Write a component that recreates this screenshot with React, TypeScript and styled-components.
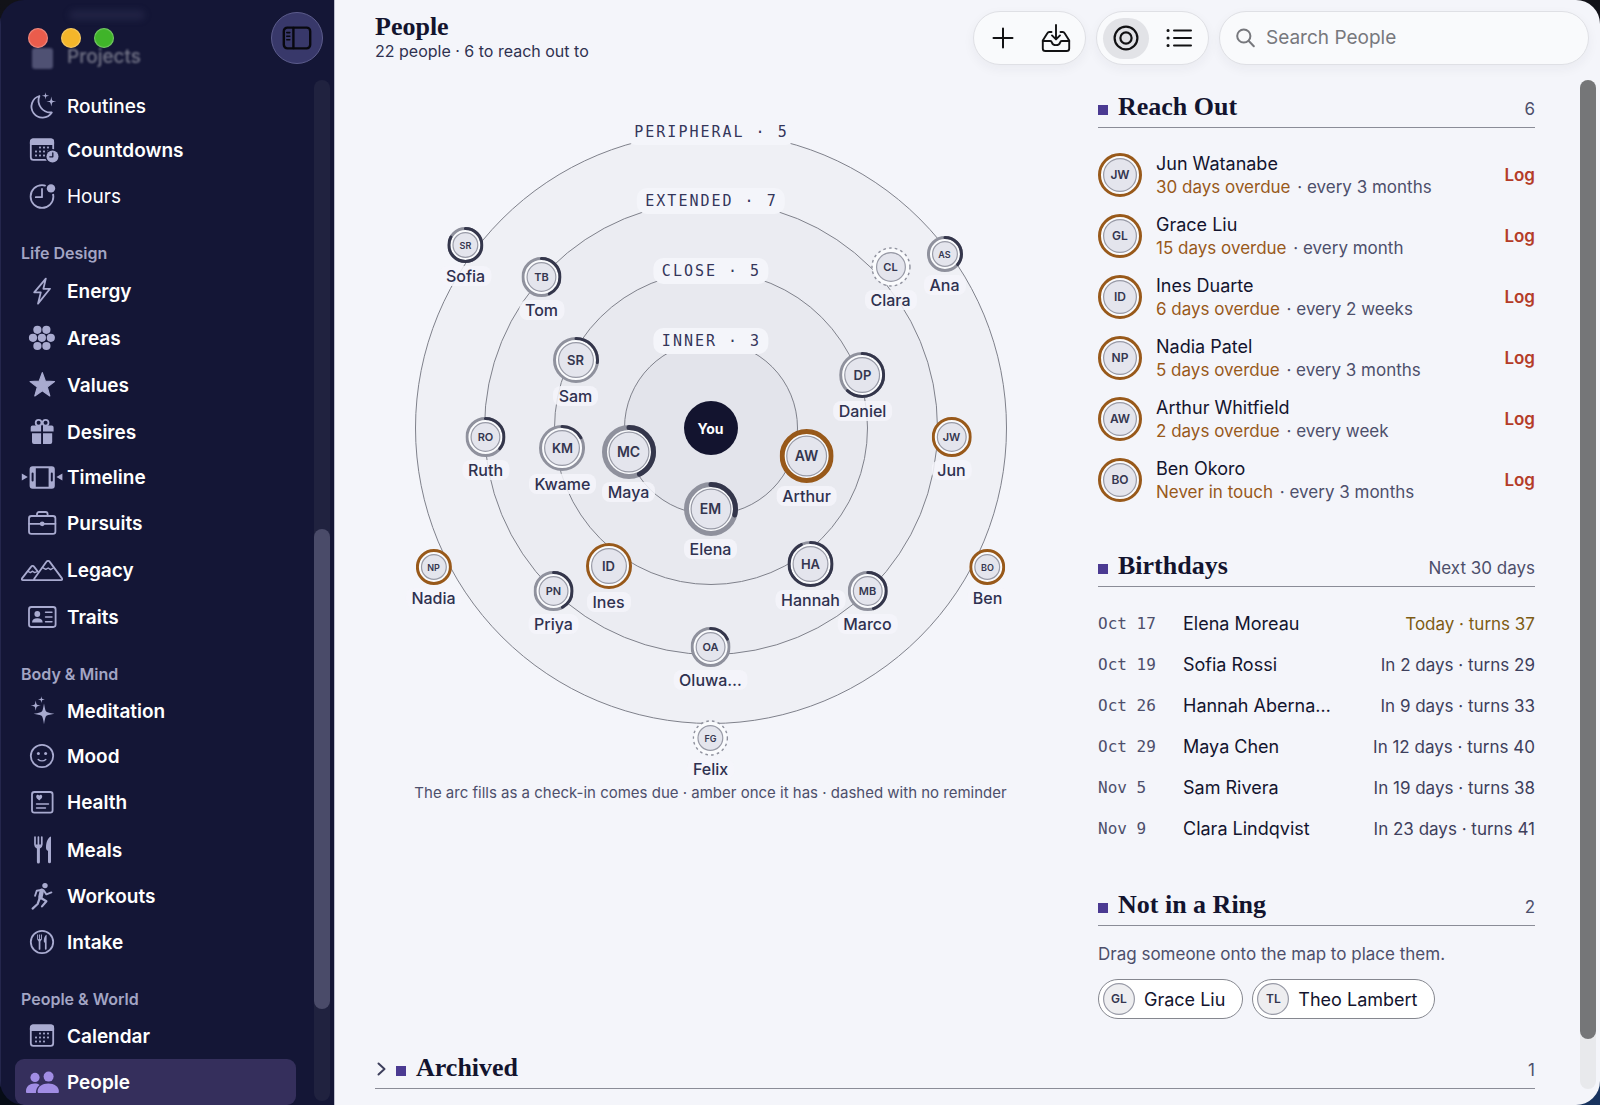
import React from "react";
import styled, { createGlobalStyle, css } from "styled-components";

const sans = `Inter, "Liberation Sans", sans-serif`;
const serif = `"Liberation Serif", serif`;
const mono = `"DejaVu Sans Mono", "Liberation Mono", monospace`;

const color = {
  night: "#141636",
  icon: "#a9abd0",
  paper: "#f4f5fa",
  ink: "#13142e",
  text: "#2f3150",
  muted: "#4d4f6b",
  rule: "#8a8c97",
  amber: "#98591a",
  gold: "#7d5c14",
  red: "#b43c28",
  violet: "#4b3a92",
};

const GlobalStyle = createGlobalStyle`
  *, *::before, *::after { box-sizing: border-box; }
  body {
    margin: 0;
    font-family: ${sans};
    background:
      linear-gradient(to bottom, #121218, transparent 50%),
      linear-gradient(to right, #060c16 40%, #18335f);
  }
  button { font: inherit; color: inherit; border: 0; padding: 0; background: none; cursor: pointer; }
  ul { list-style: none; margin: 0; padding: 0; }
  h1, h2, p { margin: 0; }
`;

const Window = styled.div`
  display: grid;
  grid-template-columns: 334px minmax(0, 1fr);
  height: 100vh;
  border-radius: 24px;
  overflow: hidden;
`;

/* ---------- Sidebar ---------- */

const Sidebar = styled.aside`
  position: relative;
  display: flex;
  min-height: 0;
  overflow: hidden;
  background: ${color.night};
  border-left: 1px solid #24264c;
`;

const WindowBar = styled.div`
  position: absolute;
  inset: 0 0 auto 0;
  display: flex;
  align-items: center;
  gap: 13px;
  height: 75px;
  padding: 0 11px 0 27px;
`;

const Light = styled.button<{ $fill: string }>`
  width: 20px;
  height: 20px;
  border-radius: 50%;
  background: ${(p) => p.$fill};
  box-shadow: inset 0 0 1px 1px rgba(255, 255, 255, 0.3);
`;

const SidebarToggle = styled.button`
  display: grid;
  place-items: center;
  width: 52px;
  height: 52px;
  margin-left: auto;
  border-radius: 50%;
  background: #38386a;
  border: 1px solid #5c5c8c;
`;

const Nav = styled.nav`
  flex: 1;
  min-width: 0;
  padding: 0 18px 0 14px;
`;

const NavGroupTitle = styled.h2`
  height: 47px;
  padding: 22px 0 0 6px;
  font: 600 16px/22px ${sans};
  color: #a3a5c4;
`;

const NavLink = styled.a<{ $height: number; $weight: number; $active?: boolean }>`
  display: flex;
  align-items: center;
  gap: 4px;
  height: ${(p) => p.$height}px;
  padding-left: 6px;
  border-radius: 9px;
  font-size: 19px;
  font-weight: ${(p) => p.$weight};
  text-decoration: none;
  color: #fff;
  background: ${(p) => (p.$active ? "#352f5c" : "transparent")};
  svg { color: ${(p) => (p.$active ? "#a18de4" : color.icon)}; flex: none; }
`;

const ScrolledUnder = styled.div`
  height: 84px;
  padding-top: 6px;
  filter: blur(1px);
  opacity: 0.4;
`;

const FadedBar = styled.div`
  width: 76px;
  height: 10px;
  margin: 4px 0 12px 54px;
  border-radius: 5px;
  background: #34365a;
  filter: blur(3px);
`;

const Track = styled.div<{ $tone: "dark" | "light" }>`
  flex: none;
  width: 16px;
  margin: 80px 4px ${(p) => (p.$tone === "dark" ? 4 : 16)}px 0;
  border-radius: 8px;
  background: ${(p) => (p.$tone === "dark" ? "#20223f" : "#e8e9ec")};
`;

const Thumb = styled.div<{ $start: number; $size: number; $fill: string }>`
  height: ${(p) => p.$size}%;
  border-radius: 8px;
  background: ${(p) => p.$fill};
  position: relative;
  top: ${(p) => p.$start}%;
`;

/* ---------- Main ---------- */

const Main = styled.main`
  display: flex;
  min-width: 0;
  min-height: 0;
  overflow: hidden;
  background: ${color.paper};
  border-left: 1px solid #bfc0ce;
  color: ${color.ink};
`;

const Page = styled.div`
  flex: 1;
  min-width: 0;
  padding: 0 45px 16px 40px;
`;

const Toolbar = styled.header`
  display: flex;
  align-items: flex-start;
  gap: 10px;
  height: 80px;
  margin-right: -54px;
  padding-top: 11px;
`;

const TitleBlock = styled.div`
  flex: 1;
`;

const Title = styled.h1`
  font: 700 26px/32px ${serif};
`;

const Subtitle = styled.p`
  font-size: 16px;
  line-height: 16px;
  color: ${color.text};
`;

const pill = css`
  display: flex;
  align-items: center;
  height: 54px;
  border: 1px solid #dfe0e5;
  border-radius: 27px;
  background: #f9fafc;
  box-shadow: 0 4px 12px rgba(30, 32, 60, 0.05);
`;

const ToolGroup = styled.div`
  ${pill}
  gap: 7px;
  padding: 0 6px;
`;

const ToolButton = styled.button<{ $selected?: boolean }>`
  display: grid;
  place-items: center;
  width: 46px;
  height: 41px;
  border-radius: 21px;
  background: ${(p) => (p.$selected ? "#e2e3e7" : "transparent")};
  color: #121214;
`;

const SearchBox = styled.label`
  ${pill}
  width: 370px;
  padding: 0 16px;
  gap: 11px;
  color: #77787d;
`;

const SearchInput = styled.input`
  flex: 1;
  min-width: 0;
  padding: 0;
  border: 0;
  outline: 0;
  background: none;
  font: 400 19px/24px ${sans};
  color: ${color.ink};
  &::placeholder { color: #77787d; opacity: 1; }
`;

const Columns = styled.div`
  display: grid;
  grid-template-columns: minmax(0, 1fr) 437px;
  gap: 52px;
`;

const SectionStack = styled.div`
  display: flex;
  flex-direction: column;
  gap: 40px;
  padding-top: 11px;
`;

const SectionHead = styled.div`
  display: flex;
  align-items: baseline;
  gap: 10px;
  height: 37px;
  border-bottom: 1px solid ${color.rule};
`;

const Marker = styled.span`
  width: 10px;
  height: 10px;
  margin-bottom: -1px;
  background: ${color.violet};
`;

const SectionTitle = styled.h2`
  flex: 1;
  font: 700 26px/32px ${serif};
`;

const SectionNote = styled.span`
  font-size: 17px;
  color: ${color.muted};
`;

/* ---------- Ring map ---------- */

const MapFigure = styled.figure`
  margin: 0;
  text-align: center;
`;

const MapCanvas = styled.div`
  position: relative;
  height: 703px;
`;

const Ring = styled.div<{ $r: number; $fill: string }>`
  position: absolute;
  left: calc(50% - ${(p) => p.$r}px);
  top: ${(p) => 348 - p.$r}px;
  width: ${(p) => p.$r * 2}px;
  height: ${(p) => p.$r * 2}px;
  border-radius: 50%;
  border: 1px solid #7f818b;
  background: ${(p) => p.$fill};
`;

const RingLabel = styled.span<{ $r: number }>`
  position: absolute;
  left: 50%;
  top: ${(p) => 335 - p.$r}px;
  transform: translateX(-50%);
  padding: 0 7px 0 9px;
  border-radius: 10px;
  background: ${color.paper};
  font: 400 15px/26px ${mono};
  letter-spacing: 2px;
  white-space: pre;
  color: #34365a;
`;

const You = styled.div`
  position: absolute;
  left: calc(50% - 27px);
  top: 321px;
  display: grid;
  place-items: center;
  width: 54px;
  height: 54px;
  border-radius: 50%;
  background: #13142f;
  color: #fff;
  font-size: 14px;
  font-weight: 700;
`;

const Node = styled.button<{ $x: number; $y: number; $d: number }>`
  position: absolute;
  left: calc(50% + ${(p) => p.$x}px);
  top: ${(p) => 348 + p.$y - p.$d / 2}px;
  transform: translateX(-50%);
  display: flex;
  flex-direction: column;
  align-items: center;
  gap: 3px;
`;

const NodeName = styled.span`
  padding: 0 6px;
  border-radius: 8px;
  background: rgba(244, 245, 250, 0.85);
  font-size: 16px;
  font-weight: 500;
  line-height: 20px;
  color: ${color.text};
`;

const AvatarBox = styled.span<{ $font: number }>`
  display: grid;
  place-items: center;
  flex: none;
  font-size: ${(p) => p.$font}px;
  font-weight: 600;
  line-height: 1;
  color: #34364f;
  > * { grid-area: 1 / 1; }
  svg { display: block; }
`;

const Caption = styled.figcaption`
  font-size: 15px;
  line-height: 20px;
  color: ${color.muted};
`;

/* ---------- Lists ---------- */

const List = styled.ul`
  padding-top: 16px;
`;

const ReachRow = styled.li`
  display: flex;
  align-items: center;
  gap: 14px;
  height: 61px;
`;

const ReachText = styled.div`
  flex: 1;
  min-width: 0;
  padding-top: 2px;
`;

const PersonName = styled.div`
  font-size: 18px;
  line-height: 24px;
`;

const ReachDetail = styled.div`
  font-size: 17px;
  line-height: 23px;
  color: ${color.muted};
`;

const Overdue = styled.span`
  margin-right: 2px;
  color: ${color.amber};
`;

const LogButton = styled.button`
  font-size: 17px;
  font-weight: 600;
  color: ${color.red};
`;

const BirthdayRow = styled.li<{ $today?: boolean }>`
  display: grid;
  grid-template-columns: 85px minmax(0, 1fr) auto;
  align-items: center;
  height: 41px;
  font-size: 17px;
  color: ${(p) => (p.$today ? color.gold : "#3e405c")};
  ${PersonName} { color: ${color.ink}; }
`;

const DateText = styled.time`
  font: 400 16px/24px ${mono};
  color: ${color.muted};
`;

const Hint = styled.p`
  padding: 15px 0 12px;
  font-size: 17px;
  line-height: 26px;
  color: ${color.muted};
`;

const Chips = styled.div`
  display: flex;
  gap: 9px;
`;

const Chip = styled.button`
  display: flex;
  align-items: center;
  gap: 9px;
  height: 40px;
  padding: 0 17px 0 4px;
  border: 1px solid #85878f;
  border-radius: 20px;
  background: #fff;
  font-size: 18px;
  color: ${color.ink};
`;

const ArchiveToggle = styled.button`
  display: block;
  width: 100%;
  margin-top: 33px;
  text-align: left;
`;

const Chevron = styled.svg`
  margin: 0 0 -2px 2px;
`;

/* ---------- Drawings ---------- */

const Icon = ({ children }: { children: React.ReactNode }) => (
  <svg width="42" height="30" viewBox="0 0 42 30" fill="none" stroke="currentColor" strokeWidth="1.8" strokeLinecap="round" strokeLinejoin="round" aria-hidden="true">
    {children}
  </svg>
);

const Spark = ({ x, y, r }: { x: number; y: number; r: number }) => {
  const k = r * 0.22;
  return (
    <path
      stroke="none"
      fill="currentColor"
      d={`M${x} ${y - r}Q${x + k * 0.6} ${y - k} ${x + k} ${y - k}Q${x + k} ${y - k * 0.6} ${x + r} ${y}Q${x + k} ${y + k * 0.6} ${x + k} ${y + k}Q${x + k * 0.6} ${y + k} ${x} ${y + r}Q${x - k * 0.6} ${y + k} ${x - k} ${y + k}Q${x - k} ${y + k * 0.6} ${x - r} ${y}Q${x - k} ${y - k * 0.6} ${x - k} ${y - k}Q${x - k * 0.6} ${y - k} ${x} ${y - r}Z`}
    />
  );
};

const CalendarShape = () => (
  <>
    <rect x="9.8" y="4.3" width="22.4" height="20.6" rx="2.6" />
    <path d="M9.8 9V6.5a2 2 0 0 1 2-2h18.4a2 2 0 0 1 2 2V9z" fill="currentColor" />
    {[
      [19, 12.5], [23, 12.5], [27, 12.5],
      [15, 16.5], [19, 16.5], [23, 16.5], [27, 16.5],
      [15, 20.5], [19, 20.5], [23, 20.5],
    ].map(([x, y]) => (
      <rect key={`${x}-${y}`} x={x - 0.9} y={y - 0.9} width="1.8" height="1.8" fill="currentColor" stroke="none" />
    ))}
  </>
);

const Cutlery = () => (
  <>
    <path d="M14 2v7.5c0 2 1 2.6 2.2 3.2M20.8 2v7.5c0 2-1 2.6-2.2 3.2M17.4 2v9" strokeWidth="1.7" />
    <path d="M14.5 9.5h6l-1.6 3.2h-3z" fill="currentColor" stroke="none" />
    <path d="M17.4 11.5V27" strokeWidth="3" />
    <path d="M29.6 1.6c-3 1.8-4.6 6-4.6 11.2 0 1.7.8 2.7 2 3v11a1.5 1.5 0 0 0 3 0V2z" fill="currentColor" stroke="none" />
  </>
);

const icons: Record<string, React.ReactNode> = {
  Projects: <rect x="11" y="7" width="21" height="21" rx="3" fill="currentColor" stroke="none" />,
  Routines: (
    <>
      <path d="M18.4 5A11 11 0 1 0 30.8 21.4A12 12 0 0 1 18.4 5Z" />
      <Spark x={24.5} y={4.8} r={3.6} />
      <Spark x={30.3} y={10.6} r={5} />
    </>
  ),
  Countdowns: (
    <>
      <CalendarShape />
      <circle cx="31.5" cy="21.5" r="7.4" fill={color.night} stroke="none" />
      <circle cx="31.5" cy="21.5" r="6" fill="currentColor" stroke="none" />
      <path d="M31.8 17.8v4h-3" stroke={color.night} strokeWidth="1.3" />
    </>
  ),
  Hours: (
    <>
      <circle cx="21" cy="15.5" r="11.4" />
      <path d="M21 8v8.2h-6.2" />
      <circle cx="30" cy="7.4" r="6" fill={color.night} stroke="none" />
      <circle cx="30" cy="7.4" r="4.2" fill="currentColor" stroke="none" />
    </>
  ),
  Energy: <path d="M24.8 2.6L13.2 16.4h6.6L17 27.6L29 12.8h-6.6z" />,
  Areas: (
    <g fill="currentColor" stroke="none">
      {[[16.4, 6.8], [25.4, 6.8], [12, 14.8], [20.9, 14.8], [29.8, 14.8], [16.4, 23], [25.4, 23]].map(([x, y]) => (
        <circle key={`${x}-${y}`} cx={x} cy={y} r="4.1" />
      ))}
    </g>
  ),
  Values: (
    <path d="M21.3 2.6l3.1 8.6 9.1.3-7.2 5.6 2.5 8.8-7.5-5.1-7.5 5.1 2.5-8.8-7.2-5.6 9.1-.3z" fill="currentColor" strokeWidth="1.2" />
  ),
  Desires: (
    <>
      <circle cx="17.6" cy="5.7" r="2.9" />
      <circle cx="24.6" cy="5.7" r="2.9" />
      <path
        fill="currentColor"
        stroke="none"
        d="M11.5 8.5h8.6v6H9.7v-4a2 2 0 0 1 1.8-2zM22 8.5h8.8a2 2 0 0 1 1.8 2v4H22zM11 16.2h9.1v10.7h-7a2 2 0 0 1-2.1-2zM22 16.2h9.2v8.7a2 2 0 0 1-2.1 2H22z"
      />
    </>
  ),
  Timeline: (
    <>
      <path
        fill="currentColor"
        fillRule="evenodd"
        stroke="none"
        d="M11.600 4.200h19.200a3 3 0 0 1 3 3v16.600a3 3 0 0 1-3 3H11.600a3 3 0 0 1-3-3V7.200a3 3 0 0 1 3-3zM14.800 6.200v18.600h12.800V6.200zM10.600 11.500v7a1 1 0 0 0 2 0v-7a1 1 0 0 0-2 0zM29.800 11.500v7a1 1 0 0 0 2 0v-7a1 1 0 0 0-2 0z"
      />
      <path d="M.8 11.6v7l6-3.5zM41.400 11.600v7l-6-3.500z" fill="currentColor" stroke="none" />
    </>
  ),
  Pursuits: (
    <>
      <rect x="8" y="8" width="26.4" height="17.8" rx="2.4" />
      <path d="M16 8V6a2 2 0 0 1 2-2h6.6a2 2 0 0 1 2 2v2M8 15.8h26.4" />
      <circle cx="21.2" cy="15.8" r="2.4" fill="currentColor" stroke="none" />
    </>
  ),
  Legacy: (
    <>
      <path d="M14 25.2h26c1.2 0 1.6-.8 1-1.8L28.6 6.6a1.8 1.8 0 0 0-3 0L13.4 23.6c-.6.8-.4 1.6.6 1.6z" />
      <path d="M13.6 25.2H2c-1.2 0-1.7-.8-1-1.8l9.2-11.8a1.7 1.7 0 0 1 2.8 0l4 5.2" />
      <path d="M22 12.8l2.800 1.600 2.400-1.400 2.400 1.600 2.600-1.600M7.400 16.600l2 1 2.200-1.400 2 1.400 2-.8" strokeWidth="1.400" />
    </>
  ),
  Traits: (
    <>
      <rect x="8" y="5" width="26.6" height="20" rx="2.4" />
      <circle cx="16.3" cy="12" r="2.9" fill="currentColor" stroke="none" />
      <path d="M11 20.4c.2-3 2-4.2 5.3-4.2s5.200 1.200 5.400 4.200z" fill="currentColor" stroke="none" />
      <path d="M24.500 10.300h6.500M24.500 15h6.500M24.500 19.700h6.500" strokeWidth="1.400" />
    </>
  ),
  Meditation: (
    <>
      <Spark x={23} y={17.8} r={10.4} />
      <Spark x={14.7} y={9.6} r={5.2} />
      <Spark x={20.4} y={3.6} r={3.4} />
    </>
  ),
  Mood: (
    <>
      <circle cx="21" cy="15" r="11.2" />
      <circle cx="17.4" cy="12.4" r="1.5" fill="currentColor" stroke="none" />
      <circle cx="24.6" cy="12.4" r="1.5" fill="currentColor" stroke="none" />
      <path d="M17.2 18.4c2 2 5.600 2 7.600 0" strokeWidth="1.400" />
    </>
  ),
  Health: (
    <>
      <rect x="11" y="5" width="20.600" height="20.600" rx="2.400" />
      <path d="M18.200 13.400c-2-1.400-3-2.400-3-3.800 0-2 2.300-2.400 3-.8.7-1.600 3-1.200 3 .8 0 1.400-1 2.400-3 3.800z" fill="currentColor" stroke="none" />
      <path d="M15.500 17h12M15.500 21h9" strokeWidth="1.400" />
    </>
  ),
  Meals: <Cutlery />,
  Workouts: (
    <>
      <circle cx="24" cy="4.600" r="2.700" fill="currentColor" stroke="none" />
      <path d="M20.800 9.800l-1.400 6.400" strokeWidth="4.400" />
      <path d="M21.500 8.800l-5.800 1-1.600 5M22.600 9.200l2.800 4.200 5-2" strokeWidth="1.900" />
      <path d="M20 17l5.400 3.200-4.400 5.200M18.600 17.500l-2 5.500-5 4.600" strokeWidth="2.200" />
    </>
  ),
  Intake: (
    <>
      <circle cx="21" cy="15" r="11.200" />
      <g transform="translate(8.800 6.800) scale(.56)">
        <Cutlery />
      </g>
    </>
  ),
  Calendar: <CalendarShape />,
  People: (
    <g fill="currentColor" stroke="none">
      <circle cx="14" cy="10.400" r="4.600" />
      <path d="M5 24.400c0-4.800 3.600-7.800 8.600-7.800 2 0 3.600.4 5 1.400-2.400 1.800-3.600 4.400-3.700 8H6.200c-.8 0-1.200-.6-1.200-1.600z" />
      <circle cx="27.600" cy="9.600" r="5" />
      <path d="M16.600 24.400c0-5 4.600-8 10.700-8s10.600 3 10.600 8c0 1-.5 1.600-1.300 1.600H17.900c-.8 0-1.300-.6-1.300-1.600z" />
    </g>
  ),
};

/* ---------- Avatar ---------- */

type AvatarProps = {
  initials: string;
  d: number;
  core: number;
  stroke: number;
  font: number;
  /** Share of the check-in interval that has passed; "due" or "none" otherwise. */
  state: number | "due" | "none" | "plain";
};

function Avatar({ initials, d, core, stroke, font, state }: AvatarProps) {
  const c = d / 2;
  const r = c - stroke / 2;
  return (
    <AvatarBox $font={font}>
      <svg width={d} height={d} viewBox={`0 0 ${d} ${d}`} fill="none" aria-hidden="true">
        {state !== "plain" && <circle cx={c} cy={c} r={r} fill="#fafbfd" />}
        {typeof state === "number" && (
          <>
            <circle cx={c} cy={c} r={r} stroke="#8f919d" strokeWidth={stroke} />
            <circle
              cx={c}
              cy={c}
              r={r}
              stroke="#34364b"
              strokeWidth={stroke}
              strokeLinecap="round"
              pathLength={100}
              strokeDasharray={`${state * 100} 100`}
              transform={`rotate(-90 ${c} ${c})`}
            />
          </>
        )}
        {state === "due" && <circle cx={c} cy={c} r={r} stroke={color.amber} strokeWidth={stroke} />}
        {state === "none" && <circle cx={c} cy={c} r={c - 1} stroke="#8f919d" strokeWidth="1.4" strokeDasharray="2.600 3.200" />}
        <circle cx={c} cy={c} r={core / 2 - 0.6} fill={state === "plain" ? "#eeeef0" : "#e4e5ed"} stroke="#989aa6" strokeWidth="1.2" />
      </svg>
      <span>{initials}</span>
    </AvatarBox>
  );
}

/* ---------- Data ---------- */

type NavItem = { name: string; height: number; weight?: number };

const navTop: NavItem[] = [
  { name: "Routines", height: 44, weight: 500 },
  { name: "Countdowns", height: 44 },
  { name: "Hours", height: 48, weight: 400 },
];

const navGroups: { title: string; items: NavItem[] }[] = [
  {
    title: "Life Design",
    items: [
      { name: "Energy", height: 48 },
      { name: "Areas", height: 46 },
      { name: "Values", height: 48 },
      { name: "Desires", height: 46 },
      { name: "Timeline", height: 44 },
      { name: "Pursuits", height: 48 },
      { name: "Legacy", height: 46 },
      { name: "Traits", height: 48 },
    ],
  },
  {
    title: "Body & Mind",
    items: [
      { name: "Meditation", height: 46 },
      { name: "Mood", height: 44 },
      { name: "Health", height: 48 },
      { name: "Meals", height: 48 },
      { name: "Workouts", height: 44 },
      { name: "Intake", height: 48 },
    ],
  },
  {
    title: "People & World",
    items: [
      { name: "Calendar", height: 46 },
      { name: "People", height: 46 },
    ],
  },
];

const rings = [
  { label: "PERIPHERAL · 5", r: 296, fill: "#eff0f5" },
  { label: "EXTENDED · 7", r: 227, fill: "#ebecf2" },
  { label: "CLOSE · 5", r: 157, fill: "#e8e9ef" },
  { label: "INNER · 3", r: 87, fill: "#e3e4eb" },
];

const tiers = {
  inner: { d: 54, core: 41, stroke: 5, font: 14 },
  close: { d: 46, core: 36, stroke: 3, font: 13 },
  extended: { d: 40, core: 30, stroke: 3, font: 11 },
  peripheral: { d: 36, core: 26, stroke: 3, font: 9 },
};

type MapPerson = {
  name: string;
  initials: string;
  tier: keyof typeof tiers;
  x: number;
  y: number;
  state: number | "due" | "none";
};

const mapPeople: MapPerson[] = [
  { name: "Maya", initials: "MC", tier: "inner", x: -82, y: 24, state: 0.43 },
  { name: "Elena", initials: "EM", tier: "inner", x: 0, y: 81, state: 0.29 },
  { name: "Arthur", initials: "AW", tier: "inner", x: 96, y: 28, state: "due" },
  { name: "Sam", initials: "SR", tier: "close", x: -135, y: -68, state: 0.27 },
  { name: "Kwame", initials: "KM", tier: "close", x: -148, y: 20, state: 0.17 },
  { name: "Ines", initials: "ID", tier: "close", x: -102, y: 138, state: "due" },
  { name: "Hannah", initials: "HA", tier: "close", x: 100, y: 136, state: 0.93 },
  { name: "Daniel", initials: "DP", tier: "close", x: 152, y: -53, state: 0.62 },
  { name: "Tom", initials: "TB", tier: "extended", x: -169, y: -151, state: 0.43 },
  { name: "Ruth", initials: "RO", tier: "extended", x: -225, y: 9, state: 0.36 },
  { name: "Priya", initials: "PN", tier: "extended", x: -157, y: 163, state: 0.42 },
  { name: "Oluwa…", initials: "OA", tier: "extended", x: 0, y: 219, state: 0.18 },
  { name: "Marco", initials: "MB", tier: "extended", x: 157, y: 163, state: 0.45 },
  { name: "Jun", initials: "JW", tier: "extended", x: 241, y: 9, state: "due" },
  { name: "Clara", initials: "CL", tier: "extended", x: 180, y: -161, state: "none" },
  { name: "Sofia", initials: "SR", tier: "peripheral", x: -245, y: -183, state: 0.83 },
  { name: "Ana", initials: "AS", tier: "peripheral", x: 234, y: -174, state: 0.36 },
  { name: "Ben", initials: "BO", tier: "peripheral", x: 277, y: 139, state: "due" },
  { name: "Nadia", initials: "NP", tier: "peripheral", x: -277, y: 139, state: "due" },
  { name: "Felix", initials: "FG", tier: "peripheral", x: 0, y: 310, state: "none" },
];

const reachOut = [
  { name: "Jun Watanabe", initials: "JW", late: "30 days overdue", every: "every 3 months" },
  { name: "Grace Liu", initials: "GL", late: "15 days overdue", every: "every month" },
  { name: "Ines Duarte", initials: "ID", late: "6 days overdue", every: "every 2 weeks" },
  { name: "Nadia Patel", initials: "NP", late: "5 days overdue", every: "every 3 months" },
  { name: "Arthur Whitfield", initials: "AW", late: "2 days overdue", every: "every week" },
  { name: "Ben Okoro", initials: "BO", late: "Never in touch", every: "every 3 months" },
];

const birthdays = [
  { date: "Oct 17", name: "Elena Moreau", note: "Today · turns 37", today: true },
  { date: "Oct 19", name: "Sofia Rossi", note: "In 2 days · turns 29" },
  { date: "Oct 26", name: "Hannah Aberna…", note: "In 9 days · turns 33" },
  { date: "Oct 29", name: "Maya Chen", note: "In 12 days · turns 40" },
  { date: "Nov 5", name: "Sam Rivera", note: "In 19 days · turns 38" },
  { date: "Nov 9", name: "Clara Lindqvist", note: "In 23 days · turns 41" },
];

const unplaced = [
  { name: "Grace Liu", initials: "GL" },
  { name: "Theo Lambert", initials: "TL" },
];

/* ---------- Parts ---------- */

const NavEntry = ({ name, height, weight = 600 }: NavItem) => (
  <NavLink href="#" $height={height} $weight={weight} $active={name === "People"} aria-current={name === "People" ? "page" : undefined}>
    <Icon>{icons[name]}</Icon>
    {name}
  </NavLink>
);

const Heading = ({ title, note }: { title: string; note: string }) => (
  <SectionHead>
    <Marker />
    <SectionTitle>{title}</SectionTitle>
    <SectionNote>{note}</SectionNote>
  </SectionHead>
);

export default function App() {
  return (
    <>
      <GlobalStyle />
      <Window>
        <Sidebar>
          <Nav aria-label="Sections">
            <ScrolledUnder>
              <FadedBar />
              <NavEntry name="Projects" height={48} weight={500} />
            </ScrolledUnder>
            {navTop.map((item) => (
              <NavEntry key={item.name} {...item} />
            ))}
            {navGroups.map((group) => (
              <React.Fragment key={group.title}>
                <NavGroupTitle>{group.title}</NavGroupTitle>
                {group.items.map((item) => (
                  <NavEntry key={item.name} {...item} />
                ))}
              </React.Fragment>
            ))}
          </Nav>
          <Track $tone="dark">
            <Thumb $start={44} $size={47} $fill="#4a4b69" />
          </Track>
          <WindowBar>
            <Light $fill="#ea5c4c" aria-label="Close" />
            <Light $fill="#f4b62a" aria-label="Minimize" />
            <Light $fill="#40b42a" aria-label="Zoom" />
            <SidebarToggle aria-label="Toggle sidebar">
              <svg width="30" height="24" viewBox="0 0 30 24" fill="none" stroke="#08080f" strokeWidth="2.400" strokeLinecap="round">
                <rect x="1.800" y="1.600" width="26.400" height="20.800" rx="3.600" />
                <path d="M11.400 2v20" />
                <path d="M4.800 6.600h3M4.800 10.200h3M4.800 13.800h3" strokeWidth="1.600" />
              </svg>
            </SidebarToggle>
          </WindowBar>
        </Sidebar>

        <Main>
          <Page>
            <Toolbar>
              <TitleBlock>
                <Title>People</Title>
                <Subtitle>22 people · 6 to reach out to</Subtitle>
              </TitleBlock>
              <ToolGroup>
                <ToolButton aria-label="Add person">
                  <svg width="22" height="22" viewBox="0 0 22 22" stroke="currentColor" strokeWidth="2" strokeLinecap="round">
                    <path d="M11 1.500v19M1.500 11h19" />
                  </svg>
                </ToolButton>
                <ToolButton aria-label="Import">
                  <svg width="30" height="30" viewBox="0 0 30 30" fill="none" stroke="currentColor" strokeWidth="1.900" strokeLinecap="round" strokeLinejoin="round">
                    <path d="M15 2v14M11 12.400l4 4 4-4" />
                    <path d="M10.500 9H8.200a2 2 0 0 0-1.700 1L1.800 17.600v7.800a2.600 2.600 0 0 0 2.600 2.600h21.200a2.600 2.600 0 0 0 2.600-2.600v-7.800L23.500 10a2 2 0 0 0-1.700-1h-2.300" />
                    <path d="M1.800 18h7.400c1.200 0 1.500.6 1.700 1.400.4 1.600 2 2.700 4.100 2.700s3.700-1.100 4.100-2.700c.2-.8.500-1.400 1.700-1.400h7.400" />
                  </svg>
                </ToolButton>
              </ToolGroup>
              <ToolGroup>
                <ToolButton $selected aria-label="Map view" aria-pressed="true">
                  <svg width="26" height="26" viewBox="0 0 26 26" fill="none" stroke="currentColor" strokeWidth="2.200">
                    <circle cx="13" cy="13" r="11.400" />
                    <circle cx="13" cy="13" r="5.600" />
                  </svg>
                </ToolButton>
                <ToolButton aria-label="List view" aria-pressed="false">
                  <svg width="26" height="20" viewBox="0 0 26 20" stroke="currentColor" strokeWidth="2" strokeLinecap="round">
                    <path d="M8 2.500h17M8 10h17M8 17.500h17" />
                    <path d="M2 2.500h.1M2 10h.1M2 17.500h.1" strokeWidth="3" />
                  </svg>
                </ToolButton>
              </ToolGroup>
              <SearchBox>
                <svg width="19" height="20" viewBox="0 0 19 20" fill="none" stroke="currentColor" strokeWidth="2" strokeLinecap="round">
                  <circle cx="7.800" cy="8" r="6.600" />
                  <path d="M12.800 13l5 5.200" />
                </svg>
                <SearchInput type="search" placeholder="Search People" aria-label="Search People" />
              </SearchBox>
            </Toolbar>

            <Columns>
              <MapFigure>
                <MapCanvas>
                  {rings.map((ring) => (
                    <Ring key={ring.label} $r={ring.r} $fill={ring.fill} />
                  ))}
                  {rings.map((ring) => (
                    <RingLabel key={ring.label} $r={ring.r}>
                      {ring.label}
                    </RingLabel>
                  ))}
                  <You>You</You>
                  {mapPeople.map((p) => (
                    <Node key={p.name} $x={p.x} $y={p.y} $d={tiers[p.tier].d}>
                      <Avatar initials={p.initials} state={p.state} {...tiers[p.tier]} />
                      <NodeName>{p.name}</NodeName>
                    </Node>
                  ))}
                </MapCanvas>
                <Caption>The arc fills as a check-in comes due · amber once it has · dashed with no reminder</Caption>
              </MapFigure>

              <SectionStack>
                <section>
                  <Heading title="Reach Out" note="6" />
                  <List>
                    {reachOut.map((p) => (
                      <ReachRow key={p.name}>
                        <Avatar initials={p.initials} state="due" d={44} core={34} stroke={3} font={12} />
                        <ReachText>
                          <PersonName>{p.name}</PersonName>
                          <ReachDetail>
                            <Overdue>{p.late}</Overdue> · {p.every}
                          </ReachDetail>
                        </ReachText>
                        <LogButton>Log</LogButton>
                      </ReachRow>
                    ))}
                  </List>
                </section>
                <section>
                  <Heading title="Birthdays" note="Next 30 days" />
                  <List>
                    {birthdays.map((b) => (
                      <BirthdayRow key={b.name} $today={b.today}>
                        <DateText>{b.date}</DateText>
                        <PersonName>{b.name}</PersonName>
                        <span>{b.note}</span>
                      </BirthdayRow>
                    ))}
                  </List>
                </section>
                <section>
                  <Heading title="Not in a Ring" note="2" />
                  <Hint>Drag someone onto the map to place them.</Hint>
                  <Chips>
                    {unplaced.map((p) => (
                      <Chip key={p.name}>
                        <Avatar initials={p.initials} state="plain" d={32} core={32} stroke={1} font={12} />
                        {p.name}
                      </Chip>
                    ))}
                  </Chips>
                </section>
              </SectionStack>
            </Columns>

            <ArchiveToggle aria-expanded="false">
              <SectionHead>
                <Chevron width="9" height="14" viewBox="0 0 9 14" fill="none" stroke="#3d3f5c" strokeWidth="2" strokeLinecap="round" strokeLinejoin="round">
                  <path d="M1.500 1.500L7.500 7l-6 5.500" />
                </Chevron>
                <Marker />
                <SectionTitle as="span">Archived</SectionTitle>
                <SectionNote>1</SectionNote>
              </SectionHead>
            </ArchiveToggle>
          </Page>
          <Track $tone="light">
            <Thumb $start={0} $size={95} $fill="#757678" />
          </Track>
        </Main>
      </Window>
    </>
  );
}
